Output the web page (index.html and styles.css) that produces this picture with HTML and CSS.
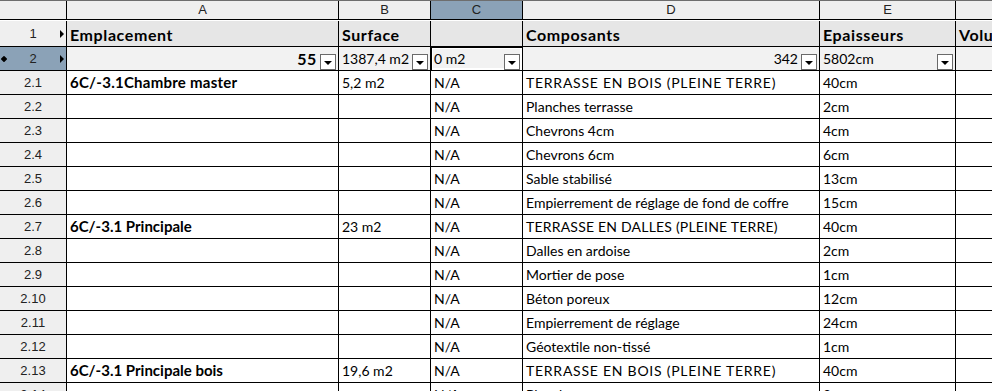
FILE: index.html
```html
<!DOCTYPE html>
<html lang="fr">
<head>
    <meta charset="UTF-8">
    <title>Feuille</title>
    <link rel="stylesheet" href="styles.css">
</head>
<body>
<div class="sheet">
    <div class="corner"></div>
    <div class="colhead">A</div>
    <div class="colhead">B</div>
    <div class="colhead sel">C</div>
    <div class="colhead">D</div>
    <div class="colhead">E</div>
    <div class="colhead"></div>

    <div class="rowhead r1">1<span class="arrow"></span></div>
    <div class="cell title">Emplacement</div>
    <div class="cell title">Surface</div>
    <div class="cell title"></div>
    <div class="cell title">Composants</div>
    <div class="cell title">Epaisseurs</div>
    <div class="cell title">Volu</div>

    <div class="rowhead r2 sel"><span class="dot"></span>2<span class="arrow"></span></div>
    <div class="cell filter"><span class="val right b">55</span><span class="drop"></span></div>
    <div class="cell filter"><span class="val">1387,4 m2</span><span class="drop"></span></div>
    <div class="cell filter cursor"><span class="val">0 m2</span><span class="drop"></span></div>
    <div class="cell filter"><span class="val right">342</span><span class="drop"></span></div>
    <div class="cell filter"><span class="val">5802cm</span><span class="drop"></span></div>
    <div class="cell filter"></div>

    <div class="rowhead">2.1</div>
    <div class="cell b wide">6C/-3.1Chambre master</div>
    <div class="cell">5,2 m2</div>
    <div class="cell">N/A</div>
    <div class="cell caps">TERRASSE EN BOIS (PLEINE TERRE)</div>
    <div class="cell">40cm</div>
    <div class="cell"></div>

    <div class="rowhead">2.2</div>
    <div class="cell"></div><div class="cell"></div>
    <div class="cell">N/A</div>
    <div class="cell">Planches terrasse</div>
    <div class="cell">2cm</div>
    <div class="cell"></div>

    <div class="rowhead">2.3</div>
    <div class="cell"></div><div class="cell"></div>
    <div class="cell">N/A</div>
    <div class="cell">Chevrons 4cm</div>
    <div class="cell">4cm</div>
    <div class="cell"></div>

    <div class="rowhead">2.4</div>
    <div class="cell"></div><div class="cell"></div>
    <div class="cell">N/A</div>
    <div class="cell">Chevrons 6cm</div>
    <div class="cell">6cm</div>
    <div class="cell"></div>

    <div class="rowhead">2.5</div>
    <div class="cell"></div><div class="cell"></div>
    <div class="cell">N/A</div>
    <div class="cell">Sable stabilisé</div>
    <div class="cell">13cm</div>
    <div class="cell"></div>

    <div class="rowhead">2.6</div>
    <div class="cell"></div><div class="cell"></div>
    <div class="cell">N/A</div>
    <div class="cell">Empierrement de réglage de fond de coffre</div>
    <div class="cell">15cm</div>
    <div class="cell"></div>

    <div class="rowhead">2.7</div>
    <div class="cell b">6C/-3.1 Principale</div>
    <div class="cell">23 m2</div>
    <div class="cell">N/A</div>
    <div class="cell caps tight">TERRASSE EN DALLES (PLEINE TERRE)</div>
    <div class="cell">40cm</div>
    <div class="cell"></div>

    <div class="rowhead">2.8</div>
    <div class="cell"></div><div class="cell"></div>
    <div class="cell">N/A</div>
    <div class="cell">Dalles en ardoise</div>
    <div class="cell">2cm</div>
    <div class="cell"></div>

    <div class="rowhead">2.9</div>
    <div class="cell"></div><div class="cell"></div>
    <div class="cell">N/A</div>
    <div class="cell">Mortier de pose</div>
    <div class="cell">1cm</div>
    <div class="cell"></div>

    <div class="rowhead">2.10</div>
    <div class="cell"></div><div class="cell"></div>
    <div class="cell">N/A</div>
    <div class="cell">Béton poreux</div>
    <div class="cell">12cm</div>
    <div class="cell"></div>

    <div class="rowhead">2.11</div>
    <div class="cell"></div><div class="cell"></div>
    <div class="cell">N/A</div>
    <div class="cell">Empierrement de réglage</div>
    <div class="cell">24cm</div>
    <div class="cell"></div>

    <div class="rowhead">2.12</div>
    <div class="cell"></div><div class="cell"></div>
    <div class="cell">N/A</div>
    <div class="cell">Géotextile non-tissé</div>
    <div class="cell">1cm</div>
    <div class="cell"></div>

    <div class="rowhead">2.13</div>
    <div class="cell b">6C/-3.1 Principale bois</div>
    <div class="cell">19,6 m2</div>
    <div class="cell">N/A</div>
    <div class="cell caps">TERRASSE EN BOIS (PLEINE TERRE)</div>
    <div class="cell">40cm</div>
    <div class="cell"></div>

    <div class="rowhead">2.14</div>
    <div class="cell"></div><div class="cell"></div>
    <div class="cell">N/A</div>
    <div class="cell">Planches terrasse</div>
    <div class="cell">2cm</div>
    <div class="cell"></div>
</div>
</body>
</html>
```

FILE: styles.css
```css
*{
    margin: 0;
    padding: 0;
    box-sizing: border-box;
}
body{
    width: 992px;
    height: 391px;
    overflow: hidden;
    background: #fff;
}
.sheet{
    display: grid;
    grid-template-columns: 67px 272px 92px 92px 297px 136px 60px;
    grid-template-rows: 20px 26px 24px;
    grid-auto-rows: 24px;
    border-top: 1px solid #6e6e6e;
    font-family: "Lato", "Liberation Sans", sans-serif;
    font-size: 14px;
    color: #000;
}
.corner, .colhead, .rowhead{
    background: #efefef;
    border-right: 1px solid #000;
    border-bottom: 1px solid #000;
    font-family: "Liberation Sans", Arial, sans-serif;
    font-size: 13px;
    color: #222;
}
.corner, .colhead{
    height: 19px;
}
.colhead{
    text-align: center;
    line-height: 18px;
}
.rowhead{
    position: relative;
    display: flex;
    align-items: center;
    justify-content: center;
}
.sel{
    background: #8ba2b7;
}
.arrow{
    position: absolute;
    right: 2px;
    top: 50%;
    margin-top: -4px;
    border-left: 4px solid #000;
    border-top: 4px solid transparent;
    border-bottom: 4px solid transparent;
}
.dot{
    position: absolute;
    left: 1px;
    top: 50%;
    margin-top: -3px;
    width: 6px;
    height: 6px;
    background: #000;
    transform: rotate(45deg) scale(0.8);
    border-radius: 1px;
}
.cell{
    border-right: 1px solid #000;
    border-bottom: 1px solid #000;
    padding: 0 3px;
    line-height: 23px;
    white-space: nowrap;
    overflow: hidden;
}
.title{
    background: #e6e6e6;
    font-weight: bold;
    font-size: 16px;
    letter-spacing: 0.6px;
    line-height: 25px;
    padding-top: 1px;
}
.filter{
    background: #f2f2f2;
    display: flex;
    align-items: flex-end;
    padding: 0 2px 0 3px;
}
.val{
    flex: 1;
    align-self: center;
}
.right{
    text-align: right;
    padding-right: 3px;
}
.b{
    font-weight: bold;
    font-size: 15px;
}
.wide{
    letter-spacing: 0.25px;
}
.filter .b{
    font-size: 16px;
    letter-spacing: 0.6px;
}
.caps{
    letter-spacing: 0.75px;
}
.tight{
    letter-spacing: 0.2px;
}
.drop{
    width: 16px;
    height: 16px;
    background: #fff;
    border: 1px solid #6a6a6a;
    display: flex;
    align-items: center;
    justify-content: center;
}
.drop::after{
    content: "";
    border-top: 4px solid #000;
    border-left: 4px solid transparent;
    border-right: 4px solid transparent;
    margin-top: 1px;
}
.cursor{
    box-shadow: inset 1px 1px 0 #000, inset 0 0 0 2px #fff;
}
```
